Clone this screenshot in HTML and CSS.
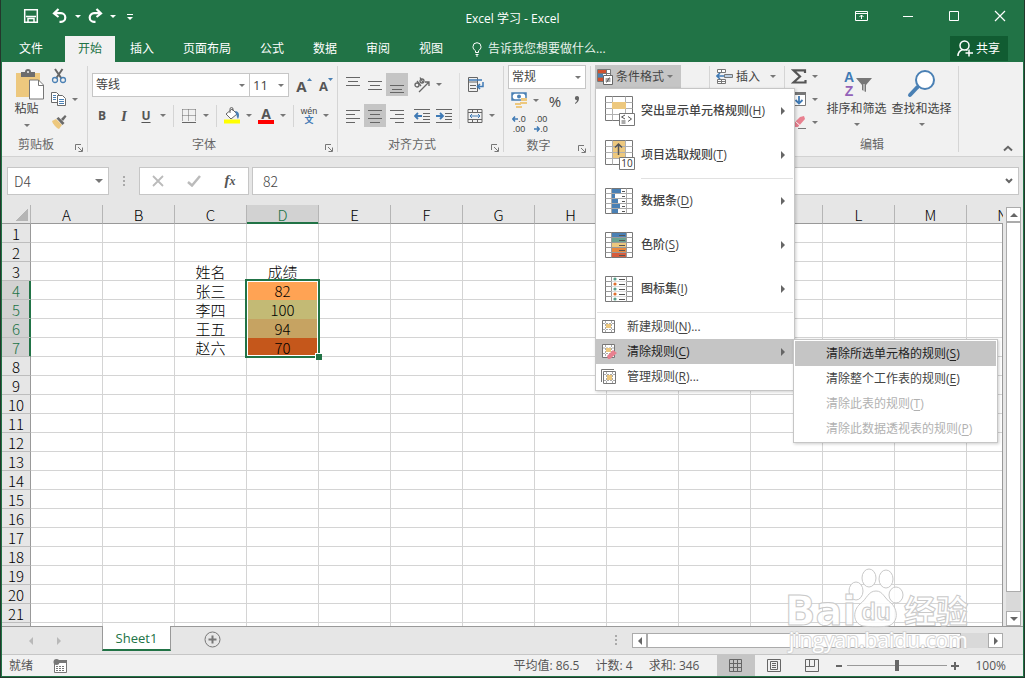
FILE: index.html
```html
<!DOCTYPE html>
<html lang="zh-CN">
<head>
<meta charset="utf-8">
<title>Excel 学习 - Excel</title>
<link rel="stylesheet" href="styles.css">
</head>
<body>
<div class="app">

  <header class="titlebar">
    <div class="quick">
      <button class="qbtn" aria-label="保存"><svg width="16" height="16" viewBox="0 0 16 16" fill="none" stroke="#fff" stroke-width="1.500"><path d="M1.700 1.700h12.600v12.600H1.700zM3 8.500h10M5 14v-3.500h6V14"/></svg></button>
      <button class="qbtn" aria-label="撤消"><svg width="16" height="16" viewBox="0 0 16 16" fill="none" stroke="#fff" stroke-width="2.200"><path d="M6.500 1L2 5.500 6.500 9M2.500 5.200h6.500a4.300 4.300 0 0 1 0 8.600H7.500"/></svg></button>
      <button class="more light" aria-label="撤消选项"><i class="caret"></i></button>
      <button class="qbtn" aria-label="恢复"><svg width="16" height="16" viewBox="0 0 16 16" fill="none" stroke="#fff" stroke-width="2.200"><path d="M9.500 1L14 5.500 9.500 9M13.500 5.200H7a4.300 4.300 0 0 0 0 8.600h1.500"/></svg></button>
      <button class="more light" aria-label="恢复选项"><i class="caret"></i></button>
      <button class="qbtn" aria-label="自定义快速访问工具栏"><svg width="10" height="10" viewBox="0 0 10 10" fill="#fff"><path d="M2 3h6v1H2zM2 6h6L5 9z"/></svg></button>
    </div>
    <h1 class="title">Excel 学习 - Excel</h1>
    <div class="winbtns">
      <button aria-label="功能区显示选项"><svg width="14" height="12" viewBox="0 0 14 12" fill="none" stroke="#fff"><path d="M.5 1.500h12v9H.5zM.5 3.500h12M6.500 9V5M4.500 7l2-2 2 2"/></svg></button>
      <button aria-label="最小化"><svg width="12" height="12" viewBox="0 0 12 12" stroke="#fff"><path d="M1 6.500h10"/></svg></button>
      <button aria-label="最大化"><svg width="12" height="12" viewBox="0 0 12 12" fill="none" stroke="#fff"><path d="M1.500 1.500h9v9h-9z"/></svg></button>
      <button aria-label="关闭"><svg width="12" height="12" viewBox="0 0 12 12" stroke="#fff" stroke-width="1.200"><path d="M1 1l10 10M11 1L1 11"/></svg></button>
    </div>
  </header>

  <nav class="tabs">
    <button class="tab file">文件</button>
    <button class="tab active">开始</button>
    <button class="tab">插入</button>
    <button class="tab">页面布局</button>
    <button class="tab">公式</button>
    <button class="tab">数据</button>
    <button class="tab">审阅</button>
    <button class="tab">视图</button>
    <button class="tell"><svg width="10" height="15" viewBox="0 0 10 15" fill="none" stroke="#fff"><path d="M3.500 10.500V8.800C1.800 7.500 1 6.500 1 4.700a4 4 0 0 1 8 0c0 1.800-.8 2.800-2.500 4.100v1.700zM3.500 12.500h3M4 14h2"/></svg>告诉我您想要做什么...</button>
    <button class="share"><svg width="16" height="17" viewBox="0 0 16 17" fill="none" stroke="#fff" stroke-width="1.500"><circle cx="7.500" cy="5.500" r="4.500"/><path d="M1 16c0-3.500 2-5.500 4.500-6.500M9 9.500l1.500 1M12 9.500v7M8.500 13H16"/></svg>共享</button>
  </nav>

  <section class="ribbon">
    <div class="group clipboard">
      <div class="body">
        <button class="paste"><svg width="30" height="31" viewBox="0 0 30 31"><path d="M1 4h24v24H1z" fill="#edc87e"/><path d="M6 3h4a3 3 0 0 1 6 0h4v5H6z" fill="#6d6d6d"/><circle cx="13" cy="3" r="1" fill="#f1f1f1"/><path d="M14.500 11h9l5 5v14h-14z" fill="#fff" stroke="#777"/><path d="M23.500 11v5.500h5.500" fill="none" stroke="#777"/></svg><span>粘贴</span><i class="caret"></i></button>
        <div class="stack">
          <button aria-label="剪切"><svg width="16" height="16" viewBox="0 0 16 16" fill="none"><path d="M4 1l6.500 9.500M11.500 1L5 10.500" stroke="#666" stroke-width="2"/><circle cx="4" cy="12" r="2.500" stroke="#4a80b4" stroke-width="1.300"/><circle cx="12" cy="12" r="2.500" stroke="#4a80b4" stroke-width="1.300"/></svg></button>
          <span class="split"><button aria-label="复制"><svg width="16" height="16" viewBox="0 0 16 16" fill="#fff" stroke="#6a6a6a"><path d="M.5 1.500h5l3 3v7h-8z"/><path d="M2 4.500h3M2 6.500h3M2 8.500h3" stroke="#4a80b4"/><path d="M6.500 4.500h5l3 3v7h-8z"/><path d="M8 8.500h5M8 10.500h5M8 12.500h5" stroke="#4a80b4"/></svg></button><button class="more" aria-label="复制选项"><i class="caret"></i></button></span>
          <button aria-label="格式刷"><svg width="16" height="16" viewBox="0 0 16 16"><path d="M1 7l4-2 6 6-3 4C5 14 2 10 1 7z" fill="#edc87e"/><path d="M5.500 4.500l2-1.500 6 6-2 2z" fill="#6a6a6a"/><path d="M10 5l4-4 1.500 1.500-3.500 4.500z" fill="#6a6a6a"/></svg></button>
        </div>
      </div>
      <div class="label">剪贴板<svg class="launch" width="8" height="8" viewBox="0 0 8 8" fill="none" stroke="#777"><path d="M.5 6V.5H6M3 3l4 4M7.500 3.500v4h-4"/></svg></div>
    </div>

    <div class="group font">
      <div class="body">
        <div class="row">
          <label class="combo family"><select aria-label="字体"><option>等线</option></select><i class="caret"></i></label>
          <label class="combo size"><select aria-label="字号"><option>11</option></select><i class="caret"></i></label>
          <button class="ic grow first" aria-label="增大字号"><span class="big">A</span><svg width="5" height="3" viewBox="0 0 5 3"><path d="M0 3L2.500 0 5 3z" fill="#4a80b4"/></svg></button>
          <button class="ic grow" aria-label="减小字号"><span>A</span><svg width="5" height="3" viewBox="0 0 5 3"><path d="M0 0h5L2.500 3z" fill="#4a80b4"/></svg></button>
        </div>
        <div class="row second">
          <button class="ic letter b">B</button>
          <button class="ic letter i">I</button>
          <button class="ic letter u">U</button><button class="more" aria-label="下划线选项"><i class="caret"></i></button>
          <i class="vsep"></i>
          <button class="ic" aria-label="边框"><svg width="14" height="14" viewBox="0 0 14 14" fill="none" stroke="#666"><path d="M.5 .5h13M.5 .5v12M13.500 .5v12M6.500 .5v12M.5 6.500h13" stroke-dasharray="1 1"/><path d="M0 13.500h14"/></svg></button><button class="more" aria-label="边框选项"><i class="caret"></i></button>
          <i class="vsep"></i>
          <button class="ic" aria-label="填充颜色"><svg width="17" height="17" viewBox="0 0 17 17"><path d="M2 7l6-5 5 5-6 5z" fill="#fff" stroke="#666"/><path d="M6 6V2a1.500 1.500 0 0 1 3 0v2" fill="none" stroke="#666"/><path d="M11 4c4 0 5 4 3 8-1-1-1-3-2-5z" fill="#4a80b4"/><path d="M0 12.500h16v4H0z" fill="#ff0"/></svg></button><button class="more" aria-label="填充颜色选项"><i class="caret"></i></button>
          <button class="ic fontcolor" aria-label="字体颜色">A</button><button class="more" aria-label="字体颜色选项"><i class="caret"></i></button>
          <i class="vsep"></i>
          <button class="ic pinyin" aria-label="拼音"><span>wén</span><b>文</b></button><button class="more" aria-label="拼音选项"><i class="caret"></i></button>
        </div>
      </div>
      <div class="label">字体<svg class="launch" width="8" height="8" viewBox="0 0 8 8" fill="none" stroke="#777"><path d="M.5 6V.5H6M3 3l4 4M7.500 3.500v4h-4"/></svg></div>
    </div>

    <div class="group align">
      <div class="body">
        <div class="aligns">
          <div class="row">
            <button class="ic" aria-label="顶端对齐"><svg width="14" height="16" viewBox="0 0 14 16" stroke="#666"><path d="M0 .5h14M2 4.500h10M0 8.500h14"/></svg></button>
            <button class="ic" aria-label="垂直居中"><svg width="14" height="16" viewBox="0 0 14 16" stroke="#666"><path d="M0 4.500h14M2 8.500h10M0 12.500h14"/></svg></button>
            <button class="ic on" aria-label="底端对齐"><svg width="14" height="16" viewBox="0 0 14 16" stroke="#666"><path d="M0 8.500h14M2 12.500h10M0 15.500h14"/></svg></button>
            <button class="ic" aria-label="方向"><svg width="18" height="16" viewBox="0 0 18 16" fill="none" stroke="#666" stroke-width="1.300"><circle cx="4" cy="8" r="2"/><path d="M4 4l4 5"/><circle cx="9" cy="4" r="2"/><path d="M7 .5l3 5M6 15L16 5M12 5h4v4"/></svg></button><button class="more" aria-label="方向选项"><i class="caret"></i></button>
          </div>
          <div class="row second">
            <button class="ic" aria-label="左对齐"><svg width="14" height="14" viewBox="0 0 14 14" stroke="#666"><path d="M0 1.500h14M0 5.500h9M0 9.500h14M0 13.500h9"/></svg></button>
            <button class="ic on" aria-label="居中"><svg width="14" height="14" viewBox="0 0 14 14" stroke="#666"><path d="M0 1.500h14M2 5.500h10M0 9.500h14M2 13.500h10"/></svg></button>
            <button class="ic" aria-label="右对齐"><svg width="14" height="14" viewBox="0 0 14 14" stroke="#666"><path d="M0 1.500h14M5 5.500h9M0 9.500h14M5 13.500h9"/></svg></button>
            <button class="ic" aria-label="减少缩进量"><svg width="16" height="14" viewBox="0 0 16 14" fill="none" stroke="#666"><path d="M0 .5h16M9 4.500h7M9 7.500h7M9 10.500h7M0 13.500h16"/><path d="M8 7H1M4 4L1 7l3 3" stroke="#3f7ab5" stroke-width="1.800"/></svg></button>
            <button class="ic" aria-label="增加缩进量"><svg width="16" height="14" viewBox="0 0 16 14" fill="none" stroke="#666"><path d="M0 .5h16M9 4.500h7M9 7.500h7M9 10.500h7M0 13.500h16"/><path d="M0 7h7M4 4l3 3-3 3" stroke="#3f7ab5" stroke-width="1.800"/></svg></button>
          </div>
        </div>
        <div class="wraps">
          <button class="ic" aria-label="自动换行"><svg width="17" height="16" viewBox="0 0 17 16" fill="none" stroke="#666"><path d="M1.500 .5h9v14h-9zM1.500 5h9M3 8.500h6M3 11.500h6"/><path d="M2 3h13M16 5v4.500h-5M13 7l-2.500 2.500L13 12" stroke="#3f7ab5" stroke-width="1.500"/></svg></button>
          <span class="split"><button class="ic" aria-label="合并后居中"><svg width="16" height="16" viewBox="0 0 16 16" fill="none" stroke="#666"><path d="M1 1.500h14v13H1zM1 4.500h14M1 11.500h14M5.500 1.500v3M10.500 1.500v3M5.500 11.500v3M10.500 11.500v3"/><path d="M3 8h10M5 6L3 8l2 2M11 6l2 2-2 2" stroke="#3f7ab5"/></svg></button><button class="more" aria-label="合并选项"><i class="caret"></i></button></span>
        </div>
      </div>
      <div class="label">对齐方式<svg class="launch" width="8" height="8" viewBox="0 0 8 8" fill="none" stroke="#777"><path d="M.5 6V.5H6M3 3l4 4M7.500 3.500v4h-4"/></svg></div>
    </div>

    <div class="group number">
      <div class="body">
        <label class="combo format"><select aria-label="数字格式"><option>常规</option></select><i class="caret"></i></label>
        <div class="row">
          <button class="ic" aria-label="会计数字格式"><svg width="17" height="17" viewBox="0 0 17 17"><path d="M1 1h14v7H1z" fill="#fff" stroke="#4a80b4" stroke-width="1.500"/><path d="M1 1h3L1 4zM15 1h-3l3 3zM1 8h3L1 5z" fill="#4a80b4"/><circle cx="8" cy="4.500" r="2" fill="#4a80b4"/><path d="M10 6h6v3h-6zM9 10h7v2H9zM4 11h6v2H4zM5 14h6v2H5z" fill="#edc87e"/></svg></button><button class="more" aria-label="会计格式选项"><i class="caret"></i></button>
          <button class="ic pct">%</button>
          <button class="ic comma" aria-label="千位分隔样式"><svg width="6" height="9" viewBox="0 0 6 9"><path d="M3 0a2 2 0 0 1 2 2.500C5 5 3.500 7 1 8V7C2.500 6 3 5 3 4.300a2.100 2.100 0 0 1 0-4.300z" fill="#666"/></svg></button>
        </div>
        <div class="row">
          <button class="ic dec" aria-label="增加小数位数"><span><svg width="6" height="6" viewBox="0 0 6 6" fill="none" stroke="#3f7ab5" stroke-width="1.500"><path d="M6 3H1M3 .5L.8 3 3 5.500"/></svg>.0</span><span>.00</span></button>
          <button class="ic dec" aria-label="减少小数位数"><span>.00</span><span><svg width="6" height="6" viewBox="0 0 6 6" fill="none" stroke="#3f7ab5" stroke-width="1.500"><path d="M0 3h5M3 .5L5.200 3 3 5.500"/></svg>.0</span></button>
        </div>
      </div>
      <div class="label">数字<svg class="launch" width="8" height="8" viewBox="0 0 8 8" fill="none" stroke="#777"><path d="M.5 6V.5H6M3 3l4 4M7.500 3.500v4h-4"/></svg></div>
    </div>

    <div class="group styles">
      <div class="body">
        <button class="wide on" aria-expanded="true"><svg width="16" height="16" viewBox="0 0 16 16"><path d="M.5 .5h13v12H.5z" fill="#fff" stroke="#777"/><path d="M1 1h8v3H1zM1 9h5v3H1z" fill="#d0512f"/><path d="M1 5h5v3H1z" fill="#4a80b4"/><path d="M.5 4.500h13M.5 8.500h13M9.500 .5v6" stroke="#777"/><path d="M6.500 6.500h9v9h-9z" fill="#fff" stroke="#666"/><path d="M8.500 10h5M8.500 12h5M12.500 8.500l-3 5" stroke="#555"/></svg>条件格式<i class="caret"></i></button>
        <div class="menu" role="menu">
          <button class="item large" role="menuitem"><svg width="30" height="30" viewBox="0 0 30 30"><path d="M.5 .5h27v24H.5z" fill="#fff" stroke="#777"/><path d="M7.500 .5v24M20.500 .5v24M.5 6.500h27M.5 12.500h27M.5 18.500h27" stroke="#b0b0b0"/><path d="M7 6h14v7H7z" fill="#edc87e"/><path d="M14.500 17.500h15v12h-15z" fill="#fff" stroke="#777"/><path d="M20 19l-3.500 2 3.500 2M16.500 25h4M16.500 27h4M23 20.500l3.500 2.500-3.500 2.500" fill="none" stroke="#555"/></svg><span>突出显示单元格规则(<u>H</u>)</span><i class="arrow"></i></button>
          <button class="item large" role="menuitem"><svg width="30" height="30" viewBox="0 0 30 30"><path d="M.5 .5h27v24H.5z" fill="#fff" stroke="#777"/><path d="M8 1h12v17H8z" fill="#edc87e"/><path d="M7.500 .5v24M20.500 .5v24M.5 6.500h27M.5 12.500h27M.5 18.500h27" stroke="#b0b0b0"/><path d="M13.500 15V4M10 7.500L13.500 4 17 7.500" fill="none" stroke="#555" stroke-width="1.500"/><path d="M14.500 17.500h15v12h-15z" fill="#fff" stroke="#777"/><text x="22" y="27" class="ten" text-anchor="middle">10</text></svg><span>项目选取规则(<u>T</u>)</span><i class="arrow"></i></button>
          <hr class="inset">
          <button class="item large" role="menuitem"><svg width="30" height="26" viewBox="0 0 30 26"><path d="M.5 .5h27v25H.5z" fill="#fff" stroke="#777"/><path d="M6.500 .5v25M21.500 .5v25M.5 5.500h27M.5 10.500h27M.5 15.500h27M.5 20.500h27" stroke="#aaa"/><path d="M7 1h9v4H7zM7 6h3v4H7zM7 11h6v4H7zM7 16h8v4H7zM7 21h6v4H7z" fill="#4a80b4"/><path d="M17 3.500h3M17 8.500h3M17 13.500h3M17 18.500h3M17 23.500h3" stroke="#555"/></svg><span>数据条(<u>D</u>)</span><i class="arrow"></i></button>
          <button class="item large" role="menuitem"><svg width="30" height="26" viewBox="0 0 30 26"><path d="M.5 .5h27v25H.5z" fill="#fff" stroke="#777"/><path d="M6.500 .5v25M21.500 .5v25M.5 5.500h27M.5 10.500h27M.5 15.500h27M.5 20.500h27" stroke="#999"/><path d="M7 1h14v4H7z" fill="#4a80b4"/><path d="M7 6h14v4H7z" fill="#6aa391"/><path d="M7 11h14v4H7z" fill="#edc87e"/><path d="M7 16h14v4H7z" fill="#e8893f"/><path d="M7 21h14v4H7z" fill="#d65c3c"/><path d="M14 3.500h6M14 8.500h6M14 13.500h6M14 18.500h6M14 23.500h6" stroke="#555"/></svg><span>色阶(<u>S</u>)</span><i class="arrow"></i></button>
          <button class="item large" role="menuitem"><svg width="30" height="26" viewBox="0 0 30 26"><path d="M.5 .5h27v25H.5z" fill="#fff" stroke="#777"/><path d="M6.500 .5v25M21.500 .5v25M.5 5.500h6M.5 10.500h6M.5 15.500h6M.5 20.500h6M21.500 5.500h6M21.500 10.500h6M21.500 15.500h6M21.500 20.500h6" stroke="#999"/><path d="M6.500 5.500h15M6.500 10.500h15M6.500 15.500h15M6.500 20.500h15" stroke="#ddd"/><path d="M14 3.500h6M14 8.500h6M14 13.500h6M14 18.500h6M14 23.500h6" stroke="#555"/><g fill="#5aa08a"><circle cx="10" cy="3" r="1.600"/><circle cx="10" cy="13" r="1.600"/><circle cx="10" cy="23" r="1.600"/></g><g fill="#dd7030"><circle cx="10" cy="8" r="1.600"/><circle cx="10" cy="18" r="1.600"/></g></svg><span>图标集(<u>I</u>)</span><i class="arrow"></i></button>
          <hr class="full">
          <button class="item" role="menuitem"><svg width="16" height="16" viewBox="0 0 16 16"><path d="M1.500 1.500h12v12h-12z" fill="#fff" stroke="#777"/><path d="M4.500 2v11M10.500 2v11M2 4.500h11M2 10.500h11" stroke="#aaa" stroke-dasharray="2 1"/><path d="M5 5h5v4H5z" fill="#edc87e"/></svg><span>新建规则(<u>N</u>)...</span></button>
          <button class="item hover" role="menuitem" aria-expanded="true"><svg width="16" height="16" viewBox="0 0 16 16"><path d="M1.500 .5h12v13h-12z" fill="#fff" stroke="#777"/><path d="M4.500 1v12M10.500 1v12M2 4h11M2 9.500h11" stroke="#aaa" stroke-dasharray="2 1"/><path d="M5 4h5v4H5z" fill="#edc87e"/><path d="M6 12l6-6 4 3-7 6H7z" fill="#e8808f"/></svg><span>清除规则(<u>C</u>)</span><i class="arrow"></i></button>
          <button class="item" role="menuitem"><svg width="16" height="16" viewBox="0 0 16 16"><path d="M.5 13V.5H13" fill="none" stroke="#777"/><path d="M2.500 2.500h12v12h-12z" fill="#fff" stroke="#777"/><path d="M5.500 3v11M11.500 3v11M3 5.500h11M3 11.500h11" stroke="#aaa" stroke-dasharray="2 1"/><path d="M6 6h5v5H6z" fill="#edc87e"/></svg><span>管理规则(<u>R</u>)...</span></button>
          <div class="menu sub" role="menu">
            <button class="item hover" role="menuitem"><span>清除所选单元格的规则(<u>S</u>)</span></button>
            <button class="item" role="menuitem"><span>清除整个工作表的规则(<u>E</u>)</span></button>
            <button class="item" role="menuitem" disabled><span>清除此表的规则(<u>T</u>)</span></button>
            <button class="item" role="menuitem" disabled><span>清除此数据透视表的规则(<u>P</u>)</span></button>
          </div>
        </div>
      </div>
    </div>

    <div class="group cells">
      <div class="body">
        <button class="wide"><svg width="17" height="16" viewBox="0 0 17 16" fill="#fff" stroke="#777"><path d="M1.500 .5h8v3h-8zM5.500 .5v3M1.500 10.500h8v4h-8zM5.500 10.500v4M1.500 12.500h8"/><path d="M8.500 5.500h8v3h-8z" fill="#bcd0e5"/><path d="M8 7H1M4 4L1 7l3 3" fill="none" stroke="#3f7ab5" stroke-width="1.600"/></svg>插入<i class="caret"></i></button>
      </div>
    </div>

    <div class="group edit">
      <div class="body">
        <div class="stack">
          <span class="split"><button aria-label="自动求和"><svg width="16" height="15" viewBox="0 0 16 15" fill="none" stroke="#555" stroke-width="2.200"><path d="M14 4V1.300H2.500L9 7.500l-6.500 6H14.500V11" /></svg></button><button class="more" aria-label="求和选项"><i class="caret"></i></button></span>
          <span class="split"><button aria-label="填充"><svg width="16" height="16" viewBox="0 0 16 16"><path d="M1.500 1.500h13v13h-13z" fill="#fff" stroke="#777"/><path d="M1 1h14v3H1z" fill="#777"/><path d="M8 5v8M4.500 9L8 12.500 11.500 9" fill="none" stroke="#3f7ab5" stroke-width="1.800"/></svg></button><button class="more" aria-label="填充选项"><i class="caret"></i></button></span>
          <span class="split"><button aria-label="清除"><svg width="16" height="14" viewBox="0 0 16 14"><path d="M2 9l7-7 4-1 1 3-7 8H4z" fill="#e8808f"/><path d="M4.500 6.500l4.500 4" stroke="#fff"/><path d="M7 13.500h8" stroke="#777"/></svg></button><button class="more" aria-label="清除选项"><i class="caret"></i></button></span>
        </div>
        <button class="tall"><svg width="32" height="32" viewBox="0 0 32 32"><text x="8" y="14" class="az a" text-anchor="middle">A</text><text x="8" y="28" class="az z" text-anchor="middle">Z</text><path d="M15 10h16l-6 7v7l-4-2v-5z" fill="#777"/><path d="M23 16v7" stroke="#f1f1f1"/></svg><span>排序和筛选</span><i class="caret"></i></button>
        <button class="tall"><svg width="32" height="32" viewBox="0 0 32 32"><circle cx="19" cy="12" r="9" fill="#fff" stroke="#4a80b4" stroke-width="2"/><path d="M11.500 19L4 27" stroke="#4a80b4" stroke-width="4" stroke-linecap="round"/></svg><span>查找和选择</span><i class="caret"></i></button>
      </div>
      <div class="label">编辑</div>
    </div>
    <button class="collapse" aria-label="折叠功能区"><svg width="10" height="7" viewBox="0 0 10 7" fill="none" stroke="#666" stroke-width="2"><path d="M1 5.500L5 1.800 9 5.500"/></svg></button>
  </section>

  <section class="formulabar">
    <label class="namebox"><input value="D4" aria-label="名称框"><i class="caret wide-caret"></i></label>
    <i class="dots"></i>
    <div class="fxbox">
      <button aria-label="取消"><svg width="12" height="12" viewBox="0 0 12 12" stroke="#bbb" stroke-width="1.800"><path d="M1 1l10 10M11 1L1 11"/></svg></button>
      <button aria-label="输入"><svg width="14" height="12" viewBox="0 0 14 12" fill="none" stroke="#bbb" stroke-width="2.500"><path d="M1 7l4 3.500L13 1"/></svg></button>
      <button class="fx" aria-label="插入函数">f<small>x</small></button>
    </div>
    <label class="formula"><input value="82" aria-label="编辑栏"><svg width="8" height="6" viewBox="0 0 8 6" fill="none" stroke="#666" stroke-width="2"><path d="M1 1l3 3 3-3"/></svg></label>
  </section>

  <main class="work">
    <div class="sheet"><table class="grid" id="grid"></table></div>
    <div class="vscroll">
      <button aria-label="向上滚动"><i class="tri up"></i></button>
      <div class="thumb"></div>
      <div class="track"></div>
      <button aria-label="向下滚动"><i class="tri down"></i></button>
    </div>
  </main>

  <section class="sheetbar">
    <div class="nav"><i class="tri left"></i><i class="tri right"></i></div>
    <button class="sheettab">Sheet1</button>
    <button class="add" aria-label="新工作表"><svg width="17" height="17" viewBox="0 0 17 17" fill="none" stroke="#777"><circle cx="8.500" cy="8.500" r="7.500"/><path d="M8.500 4.500v8M4.500 8.500h8" stroke-width="2"/></svg></button>
    <i class="dots small"></i>
    <div class="hscroll">
      <button aria-label="向左滚动"><i class="tri left"></i></button>
      <div class="thumb"></div>
      <div class="track"></div>
      <button aria-label="向右滚动"><i class="tri right"></i></button>
    </div>
  </section>

  <footer class="status">
    <span>就绪</span>
    <svg class="macro" width="14" height="14" viewBox="0 0 14 14"><path d="M1.500 5v8.500h12v-12H7" fill="#fff" stroke="#777"/><path d="M6 1h8v3H6z" fill="#777"/><circle cx="3.500" cy="3" r="3" fill="#777"/><path d="M3 7.500h9M3 9.500h9M3 11.500h9" stroke="#777" stroke-dasharray="2 1"/></svg>
    <div class="sums"><span>平均值: 86.5</span><span>计数: 4</span><span>求和: 346</span></div>
    <button class="view on" aria-label="普通"><svg width="14" height="14" viewBox="0 0 14 14" fill="none" stroke="#666"><path d="M.5 .5h12v12H.5zM4.500 .5v12M8.500 .5v12M.5 4.500h12M.5 8.500h12"/></svg></button>
    <button class="view" aria-label="页面布局"><svg width="14" height="14" viewBox="0 0 14 14" fill="none" stroke="#666"><path d="M.5 .5h13v12H.5zM3.500 2.500h7v8h-7zM5 4.500h4M5 6.500h4M5 8.500h4"/></svg></button>
    <button class="view" aria-label="分页预览"><svg width="14" height="14" viewBox="0 0 14 14" fill="none" stroke="#666"><path d="M.5 .5h13v12H.5zM4.500 .5v7M9.500 .5v7M.5 7.500h9"/></svg></button>
    <button class="zoom out" aria-label="缩小"><svg width="8" height="8" viewBox="0 0 8 8" stroke="#666" stroke-width="2"><path d="M1 4h6"/></svg></button>
    <input class="slider" type="range" min="10" max="190" value="100" aria-label="缩放">
    <button class="zoom" aria-label="放大"><svg width="8" height="8" viewBox="0 0 8 8" stroke="#666" stroke-width="2"><path d="M0 4h8M4 0v8"/></svg></button>
    <span class="percent">100%</span>
  </footer>

  <svg class="watermark" width="190" height="96" viewBox="0 0 190 96">
    <g fill="#fff" fill-opacity=".85" stroke="#c9c9c9" stroke-width="1">
      <ellipse cx="84" cy="18" rx="7" ry="9"/><ellipse cx="101" cy="19" rx="7" ry="9"/><ellipse cx="71" cy="31" rx="7" ry="9"/><ellipse cx="111" cy="35" rx="7" ry="8"/>
      <text x="0" y="65" class="wm-big">Bai</text>
      <path d="M91 31c7 0 8 7 15 12 7 6 8 20-3 23-6 1-18 1-25 0-11-3-10-16-3-22 7-5 8-13 16-13z"/>
      <text x="91" y="60" class="wm-du" text-anchor="middle">du</text>
      <text x="119" y="63" class="wm-cn">经验</text>
    </g>
    <text x="4" y="88" class="wm-url">jingyan.baidu.com</text>
  </svg>
</div>
<script src="grid.js"></script>
</body>
</html>
```
FILE: grid.js
```js
const columns = 'ABCDEFGHIJKLMN'.split('');
const rows = 22;
const values = {
  C3: '姓名', D3: '成绩',
  C4: '张三', D4: '82',
  C5: '李四', D5: '100',
  C6: '王五', D6: '94',
  C7: '赵六', D7: '70'
};
const fills = { D4: 'fill-a', D5: 'fill-b', D6: 'fill-c', D7: 'fill-d' };

const grid = document.getElementById('grid');
const head = grid.createTHead().insertRow();
const corner = document.createElement('th');
corner.className = 'corner';
head.append(corner);
for (const name of columns) {
  const th = document.createElement('th');
  th.scope = 'col';
  th.textContent = name;
  if (name === 'D') th.className = 'picked';
  head.append(th);
}

const body = grid.createTBody();
for (let r = 1; r <= rows; r++) {
  const tr = body.insertRow();
  const th = document.createElement('th');
  th.scope = 'row';
  th.textContent = r < rows ? r : '';
  if (r >= 4 && r <= 7) th.className = 'picked';
  tr.append(th);
  for (const name of columns) {
    const td = tr.insertCell();
    const key = name + r;
    td.textContent = values[key] || '';
    if (fills[key]) td.className = fills[key];
    if (key === 'D4') {
      const box = document.createElement('div');
      box.className = 'selection';
      td.append(box);
    }
  }
}
```
FILE: styles.css
```css
* { box-sizing: border-box; }

body {
  margin: 0;
  background: #24382c;
  color: #444;
  font: 12px/16px "Open Sans", "Noto Sans CJK SC", sans-serif;
}

button, input, select {
  margin: 0;
  padding: 0;
  border: 0;
  background: none;
  color: inherit;
  font: inherit;
  outline: 0;
}

svg { display: block; flex: none; }

.app {
  position: relative;
  display: flex;
  flex-direction: column;
  height: calc(100vh - 1px);
  margin: 0 1px;
  border: 1px solid #217346;
  border-top: 0;
  background: #e6e6e6;
  overflow: hidden;
}

.caret {
  display: block;
  flex: none;
  width: 6px;
  height: 3px;
  border: 3px solid transparent;
  border-top-color: #777;
  border-bottom: 0;
}
.light .caret { border-top-color: #fff; }

/* title bar */
.titlebar {
  display: grid;
  grid-template-columns: 1fr auto 1fr;
  flex: none;
  height: 36px;
  background: #217346;
  color: #fff;
}
.quick { display: flex; align-items: center; height: 32px; padding-left: 18px; }
.qbtn { display: flex; justify-content: center; width: 22px; }
.qbtn + .qbtn { margin-left: 7px; }
.more { display: flex; align-items: center; justify-content: center; width: 12px; height: 22px; flex: none; }
.light { width: 13px; }
.light + .qbtn { margin-left: 0; }
.title { margin: 0; padding-top: 2px; font-size: 12px; font-weight: 400; line-height: 34px; }
.winbtns { display: flex; justify-content: flex-end; }
.winbtns button { display: flex; align-items: center; justify-content: center; width: 46px; height: 32px; }

/* tabs */
.tabs { display: flex; flex: none; gap: 1px; height: 26px; background: #217346; color: #fff; }
.tab { padding: 0 14px; height: 26px; line-height: 24px; }
.tab.file { width: 58px; margin-right: 4px; }
.tab.active { padding: 0 13px; background: #f1f1f1; color: #217346; }
.tell { display: flex; align-items: center; gap: 6px; padding-left: 14px; color: #e8f2ec; }
.share {
  display: flex;
  align-items: center;
  gap: 3px;
  height: 25px;
  margin-left: auto;
  margin-right: 15px;
  padding: 0 8px 0 7px;
  background: #115c32;
}

/* ribbon */
.ribbon {
  position: relative;
  z-index: 2;
  display: flex;
  flex: none;
  height: 95px;
  padding-top: 3px;
  border-bottom: 1px solid #d2d2d2;
  background: #f1f1f1;
}
.group {
  position: relative;
  display: flex;
  flex-direction: column;
  flex: none;
}
.group::after {
  content: "";
  position: absolute;
  inset: 1px 0 4px auto;
  width: 1px;
  background: #d5d5d5;
}
.body { flex: 1; display: flex; }
.label { position: relative; height: 22px; text-align: center; line-height: 22px; color: #666; padding-right: 18px; }
.launch { position: absolute; right: 5px; top: 10px; }
.row { display: flex; align-items: center; }
.split { display: flex; align-items: center; }
.ic { display: flex; align-items: center; justify-content: center; width: 22px; height: 23px; flex: none; }
.on { background: #c5c5c5; }
.vsep { width: 1px; height: 22px; margin: 0 4px; background: #d5d5d5; }

.clipboard { width: 86px; }
.paste { display: flex; flex-direction: column; align-items: center; width: 33px; margin-left: 8px; padding-top: 4px; }
.paste svg { margin-left: 6px; }
.paste .caret { margin-top: 6px; }
.paste span { line-height: 18px; }
.stack { display: flex; flex-direction: column; gap: 1px; }
.stack button { display: flex; align-items: center; height: 22px; }
.clipboard .stack { margin-left: 8px; }
.clipboard .stack .more { margin-left: 2px; }

.font { width: 250px; }
.font .body, .number .body { flex-direction: column; }
.font .body { padding: 8px 0 0 3px; }
.second { margin-top: 8px; }
.font .second { margin-top: 7px; }
.combo { display: flex; align-items: center; height: 24px; border: 1px solid #c6c6c6; background: #fff; }
.combo select { flex: 1; width: 0; padding-left: 3px; appearance: none; height: 22px; }
.combo .caret { margin-right: 4px; }
.family { width: 158px; margin-left: 1px; }
.size { width: 40px; margin-left: -1px; }
.size select { font-size: 13px; }
.grow { align-items: flex-start; font: 700 13px/24px "Open Sans", sans-serif; color: #555; }
.grow.first { margin-left: 4px; }
.grow .big { font-size: 15px; }
.grow svg { margin-top: 4px; }
.letter, .fontcolor { font: 700 12px/16px "Open Sans", sans-serif; color: #555; }
.i { font-style: italic; font-family: "Liberation Serif", serif; font-size: 15px; }
.u { text-decoration: underline; text-underline-offset: 2px; }
.fontcolor { height: 17px; width: 16px; margin: 0 3px; font-size: 14px; line-height: 12px; border-bottom: 4px solid #f00; }
.pinyin { flex-direction: column; color: #444; font: 9px/9px "Liberation Sans", "Noto Sans CJK SC", sans-serif; }
.pinyin b { color: #3f7ab5; }

.align { width: 166px; }
.align .body { padding: 8px 0 0 4px; }
.aligns { width: 118px; border-right: 1px solid #ddd; height: 56px; }
.aligns .ic:nth-child(4) { margin-left: 3px; }
.wraps { padding-left: 4px; }
.wraps .split { margin-top: 8px; }

.number { width: 87px; }
.number .body { padding-left: 4px; }
.format { width: 78px; }
.pct { margin-left: 2px; font-size: 15px; }
.dec { flex-direction: column; width: 22px; font: 9px/10px "Liberation Sans", sans-serif; color: #444; }
.dec span { display: flex; align-items: center; }

.styles { width: 119px; }
.styles .body { padding-left: 4px; }
.wide { display: flex; align-items: center; gap: 3px; height: 23px; padding: 0 5px 0 2px; }
.wide.on { width: 86px; }
.cells { width: 75px; }
.cells .wide { width: 71px; padding-left: 6px; }
.cells .wide .caret { margin-left: auto; }

.edit { width: 174px; }
.edit .stack { margin-left: 6px; }
.edit .stack .more { margin-left: 2px; }
.tall { display: flex; flex-direction: column; align-items: center; width: 65px; padding-top: 3px; }
.tall span { line-height: 18px; }
.edit .stack + .tall { margin-left: 3px; }
.tall .caret { margin-top: 5px; }
.az { font: 700 14px "Liberation Sans", sans-serif; }
.a { fill: #3f7ab5; }
.z { fill: #9362b8; }
.edit .label { padding-right: 0; }
.collapse { align-self: flex-end; margin: 0 10px 4px auto; }

/* menus */
.menu {
  position: absolute;
  left: 4px;
  top: 23px;
  z-index: 5;
  width: 200px;
  padding-bottom: 1px;
  border: 1px solid #c6c6c6;
  background: #fff;
  box-shadow: 1px 1px 3px rgba(0, 0, 0, .2);
}
.menu hr { height: 1px; margin: 1px 1px 0; border: 0; background: #e1e1e1; }
.menu .inset { margin-left: 45px; }
.menu .full { margin-bottom: 1px; }
.item { display: flex; align-items: center; width: 100%; height: 25px; padding: 0 9px 0 5px; color: #444; white-space: nowrap; }
.item span { flex: 1; margin-left: 10px; text-align: left; }
.item.large { height: 44px; padding-left: 9px; font-weight: 500; }
.item.large span { margin-left: 6px; }
.item.hover { background: #c5c5c5; color: #222; }
.item:disabled { color: #b1b1b1; }
.item u { text-underline-offset: 2px; }
.arrow { width: 4px; height: 8px; border: 4px solid transparent; border-left-color: #666; border-right: 0; }
.ten { font: 10px "Open Sans", sans-serif; fill: #333; }
.menu.sub { left: 197px; top: auto; bottom: -53px; width: 205px; padding: 1px; }
.sub .item { padding-left: 21px; }

/* formula bar */
.formulabar { display: flex; align-items: center; flex: none; height: 48px; padding: 0 4px 0 5px; }
.namebox, .fxbox, .formula { display: flex; align-items: center; height: 28px; border: 1px solid #c6c6c6; background: #fff; }
.namebox { width: 102px; }
.namebox input { flex: 1; width: 0; padding-left: 6px; font-size: 14px; }
.namebox input, .formula input { font-family: "Noto Sans CJK SC", sans-serif; font-weight: 300; }
.wide-caret { width: 8px; height: 4px; border-width: 4px; border-bottom: 0; margin-right: 5px; }
.dots { width: 2px; height: 11px; margin: 0 14px; background: repeating-linear-gradient(#aaa 0 2px, transparent 2px 4px); }
.fxbox { width: 110px; margin-right: 3px; }
.fxbox button { display: flex; flex: 1; align-items: center; justify-content: center; height: 26px; }
.fxbox .fx { align-items: baseline; font: italic 700 15px/24px "Liberation Serif", serif; color: #555; }
.fx small { font-size: 12px; }
.formula { flex: 1; padding-right: 5px; }
.formula input { flex: 1; padding-left: 10px; font-size: 14px; }

/* grid */
.work { display: flex; flex: 1; min-height: 0; border-bottom: 1px solid #999; }
.sheet { position: relative; flex: 1; min-width: 0; overflow: hidden; }
.sheet::after { content: ""; position: absolute; inset: 19px 0 0 auto; width: 1px; background: #999; }
.grid { table-layout: fixed; width: 1037px; border-spacing: 0; background: #fff; color: #000; font: 300 15px/16px "Noto Sans CJK SC", sans-serif; }
.grid th, .grid td { width: 72px; height: 19px; padding: 2px 0 0; border-right: 1px solid #d4d4d4; border-bottom: 1px solid #d4d4d4; font-weight: inherit; text-align: center; }
.grid thead th { border-right-color: #b5b5b5; border-bottom-color: #999; background: #e6e6e6; }
.grid tbody th { border-right-color: #999; border-bottom-color: #bdbdbd; background: #e6e6e6; }
.grid thead .corner { width: 29px; background: linear-gradient(135deg, transparent 50%, #b5b5b5 50%) 14px 4px / 12px 12px no-repeat #e6e6e6; }
.grid .picked { background: #d2d2d2; color: #217346; }
.grid thead .picked { box-shadow: inset 0 -1px #217346; border-bottom-color: #217346; }
.grid tbody .picked { box-shadow: inset -1px 0 #217346; border-right-color: #217346; }
.grid .fill-a { position: relative; background: #ffa354; border-bottom-color: #ffa354; }
.grid .fill-b { background: #c3ba75; border-bottom-color: #c3ba75; }
.grid .fill-c { background: #c6a362; border-bottom-color: #c6a362; }
.grid .fill-d { background: #c5571b; border-bottom-color: #c5571b; }
.selection { position: absolute; left: -2px; top: -2px; z-index: 1; width: 75px; height: 79px; border: 2px solid #217346; box-shadow: inset 0 0 0 1px #fff; }
.selection::after { content: ""; position: absolute; right: -4px; bottom: -4px; width: 6px; height: 6px; border: 1px solid #fff; border-width: 1px 0 0 1px; background: #217346; }

/* scroll bars */
.tri { width: 0; height: 0; border: 4px solid transparent; }
.up { border-bottom-color: #666; border-top: 0; }
.down { border-top-color: #666; border-bottom: 0; }
.left { border-right-color: #666; border-left: 0; }
.right { border-left-color: #666; border-right: 0; }
.vscroll { display: flex; flex-direction: column; flex: none; width: 20px; padding: 2px 2px 0 3px; }
.vscroll button, .hscroll button { display: flex; align-items: center; justify-content: center; flex: none; width: 15px; height: 15px; border: 1px solid #ababab; background: #fff; }
.thumb { border: 1px solid #ababab; background: #fff; }
.track { background: #d9d9d9; }
.vscroll .thumb { flex: 372; }
.vscroll .track { flex: 19; }

.sheetbar { display: flex; align-items: flex-start; flex: none; height: 27px; padding-right: 20px; }
.nav { display: flex; align-self: center; gap: 24px; width: 100px; padding-left: 27px; opacity: .35; }
.sheettab { width: 69px; height: 25px; margin-top: -1px; border: 1px solid #999; border-width: 0 1px 2px; border-bottom-color: #217346; background: #fff; color: #217346; font-size: 13px; }
.add { margin: 4px auto 0 33px; }
.dots.small { margin: 8px 15px; }
.hscroll { display: flex; width: 371px; margin-top: 6px; }
.hscroll .thumb { flex: 314; }
.hscroll .track { flex: 27; }

/* status bar */
.status { display: flex; align-items: center; flex: none; height: 22px; padding: 0 17px 0 7px; border-top: 1px solid #c6c6c6; background: #f1f1f1; color: #555; }
.macro { margin-left: 20px; }
.sums { display: flex; gap: 16px; margin-left: auto; margin-right: 18px; }
.view { display: flex; align-items: center; justify-content: center; width: 38px; height: 21px; }
.zoom { display: flex; justify-content: center; width: 8px; }
.zoom.out { margin-left: 4px; }
.slider { width: 100px; height: 14px; margin: 0 4px; appearance: none; }
.slider::-webkit-slider-runnable-track { height: 1px; background: #999; }
.slider::-webkit-slider-thumb { appearance: none; width: 4px; height: 11px; margin-top: -5px; background: #666; }
.percent { margin-left: 16px; }

/* watermark */
.watermark { position: absolute; right: 48px; bottom: 20px; z-index: 3; pointer-events: none; }
.wm-big { font: 700 40px "DejaVu Sans", sans-serif; }
.wm-du { font: 700 24px "Liberation Sans", sans-serif; }
.wm-cn { font: 700 32px "Noto Sans CJK SC", sans-serif; }
.wm-url { font: 21px "Open Sans", sans-serif; fill: #fff; stroke: #d5d5d5; stroke-width: 2px; paint-order: stroke; }
```
